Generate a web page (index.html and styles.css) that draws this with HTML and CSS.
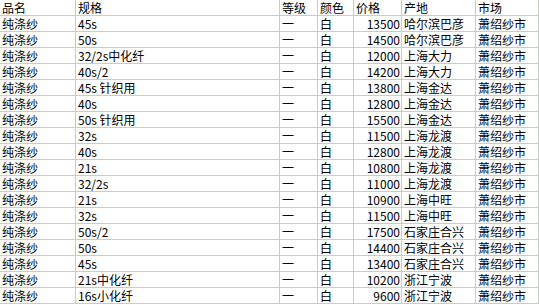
FILE: index.html
```html
<!DOCTYPE html>
<html lang="zh">
<head>
<meta charset="utf-8">
<link rel="stylesheet" href="styles.css">
</head>
<body>
<div class="sheet">
  <div class="c">品名</div><div class="c">规格</div><div class="c">等级</div><div class="c">颜色</div><div class="c">价格</div><div class="c">产地</div><div class="c">市场</div>
  <div class="c">纯涤纱</div><div class="c">45s</div><div class="c">一</div><div class="c">白</div><div class="c num">13500</div><div class="c">哈尔滨巴彦</div><div class="c">萧绍纱市</div>
  <div class="c">纯涤纱</div><div class="c">50s</div><div class="c">一</div><div class="c">白</div><div class="c num">14500</div><div class="c">哈尔滨巴彦</div><div class="c">萧绍纱市</div>
  <div class="c">纯涤纱</div><div class="c">32/2s中化纤</div><div class="c">一</div><div class="c">白</div><div class="c num">12000</div><div class="c">上海大力</div><div class="c">萧绍纱市</div>
  <div class="c">纯涤纱</div><div class="c">40s/2</div><div class="c">一</div><div class="c">白</div><div class="c num">14200</div><div class="c">上海大力</div><div class="c">萧绍纱市</div>
  <div class="c">纯涤纱</div><div class="c">45s 针织用</div><div class="c">一</div><div class="c">白</div><div class="c num">13800</div><div class="c">上海金达</div><div class="c">萧绍纱市</div>
  <div class="c">纯涤纱</div><div class="c">40s</div><div class="c">一</div><div class="c">白</div><div class="c num">12800</div><div class="c">上海金达</div><div class="c">萧绍纱市</div>
  <div class="c">纯涤纱</div><div class="c">50s 针织用</div><div class="c">一</div><div class="c">白</div><div class="c num">15500</div><div class="c">上海金达</div><div class="c">萧绍纱市</div>
  <div class="c">纯涤纱</div><div class="c">32s</div><div class="c">一</div><div class="c">白</div><div class="c num">11500</div><div class="c">上海龙渡</div><div class="c">萧绍纱市</div>
  <div class="c">纯涤纱</div><div class="c">40s</div><div class="c">一</div><div class="c">白</div><div class="c num">12800</div><div class="c">上海龙渡</div><div class="c">萧绍纱市</div>
  <div class="c">纯涤纱</div><div class="c">21s</div><div class="c">一</div><div class="c">白</div><div class="c num">10800</div><div class="c">上海龙渡</div><div class="c">萧绍纱市</div>
  <div class="c">纯涤纱</div><div class="c">32/2s</div><div class="c">一</div><div class="c">白</div><div class="c num">11000</div><div class="c">上海龙渡</div><div class="c">萧绍纱市</div>
  <div class="c">纯涤纱</div><div class="c">21s</div><div class="c">一</div><div class="c">白</div><div class="c num">10900</div><div class="c">上海中旺</div><div class="c">萧绍纱市</div>
  <div class="c">纯涤纱</div><div class="c">32s</div><div class="c">一</div><div class="c">白</div><div class="c num">11500</div><div class="c">上海中旺</div><div class="c">萧绍纱市</div>
  <div class="c">纯涤纱</div><div class="c">50s/2</div><div class="c">一</div><div class="c">白</div><div class="c num">17500</div><div class="c">石家庄合兴</div><div class="c">萧绍纱市</div>
  <div class="c">纯涤纱</div><div class="c">50s</div><div class="c">一</div><div class="c">白</div><div class="c num">14400</div><div class="c">石家庄合兴</div><div class="c">萧绍纱市</div>
  <div class="c">纯涤纱</div><div class="c">45s</div><div class="c">一</div><div class="c">白</div><div class="c num">13400</div><div class="c">石家庄合兴</div><div class="c">萧绍纱市</div>
  <div class="c">纯涤纱</div><div class="c">21s中化纤</div><div class="c">一</div><div class="c">白</div><div class="c num">10200</div><div class="c">浙江宁波</div><div class="c">萧绍纱市</div>
  <div class="c">纯涤纱</div><div class="c">16s小化纤</div><div class="c">一</div><div class="c">白</div><div class="c num">9600</div><div class="c">浙江宁波</div><div class="c">萧绍纱市</div>
</div>
</body>
</html>
```
FILE: styles.css
```css
html, body {
  margin: 0;
  padding: 0;
  background: #ffffff;
}
.sheet {
  display: grid;
  grid-template-columns: 76px 204px 38px 36px 48px 74px 63px;
  grid-auto-rows: 16px;
  font-family: "Noto Sans CJK SC", "Noto Sans", sans-serif;
  font-size: 12px;
  color: #000000;
}
.c {
  box-sizing: border-box;
  border-right: 1px solid #c6cfc6;
  border-bottom: 1px solid #c6cfc6;
  padding: 0 2px 0 2px;
  line-height: 15px;
  white-space: nowrap;
  overflow: hidden;
}
.num {
  text-align: right;
  padding-right: 1px;
}
```
